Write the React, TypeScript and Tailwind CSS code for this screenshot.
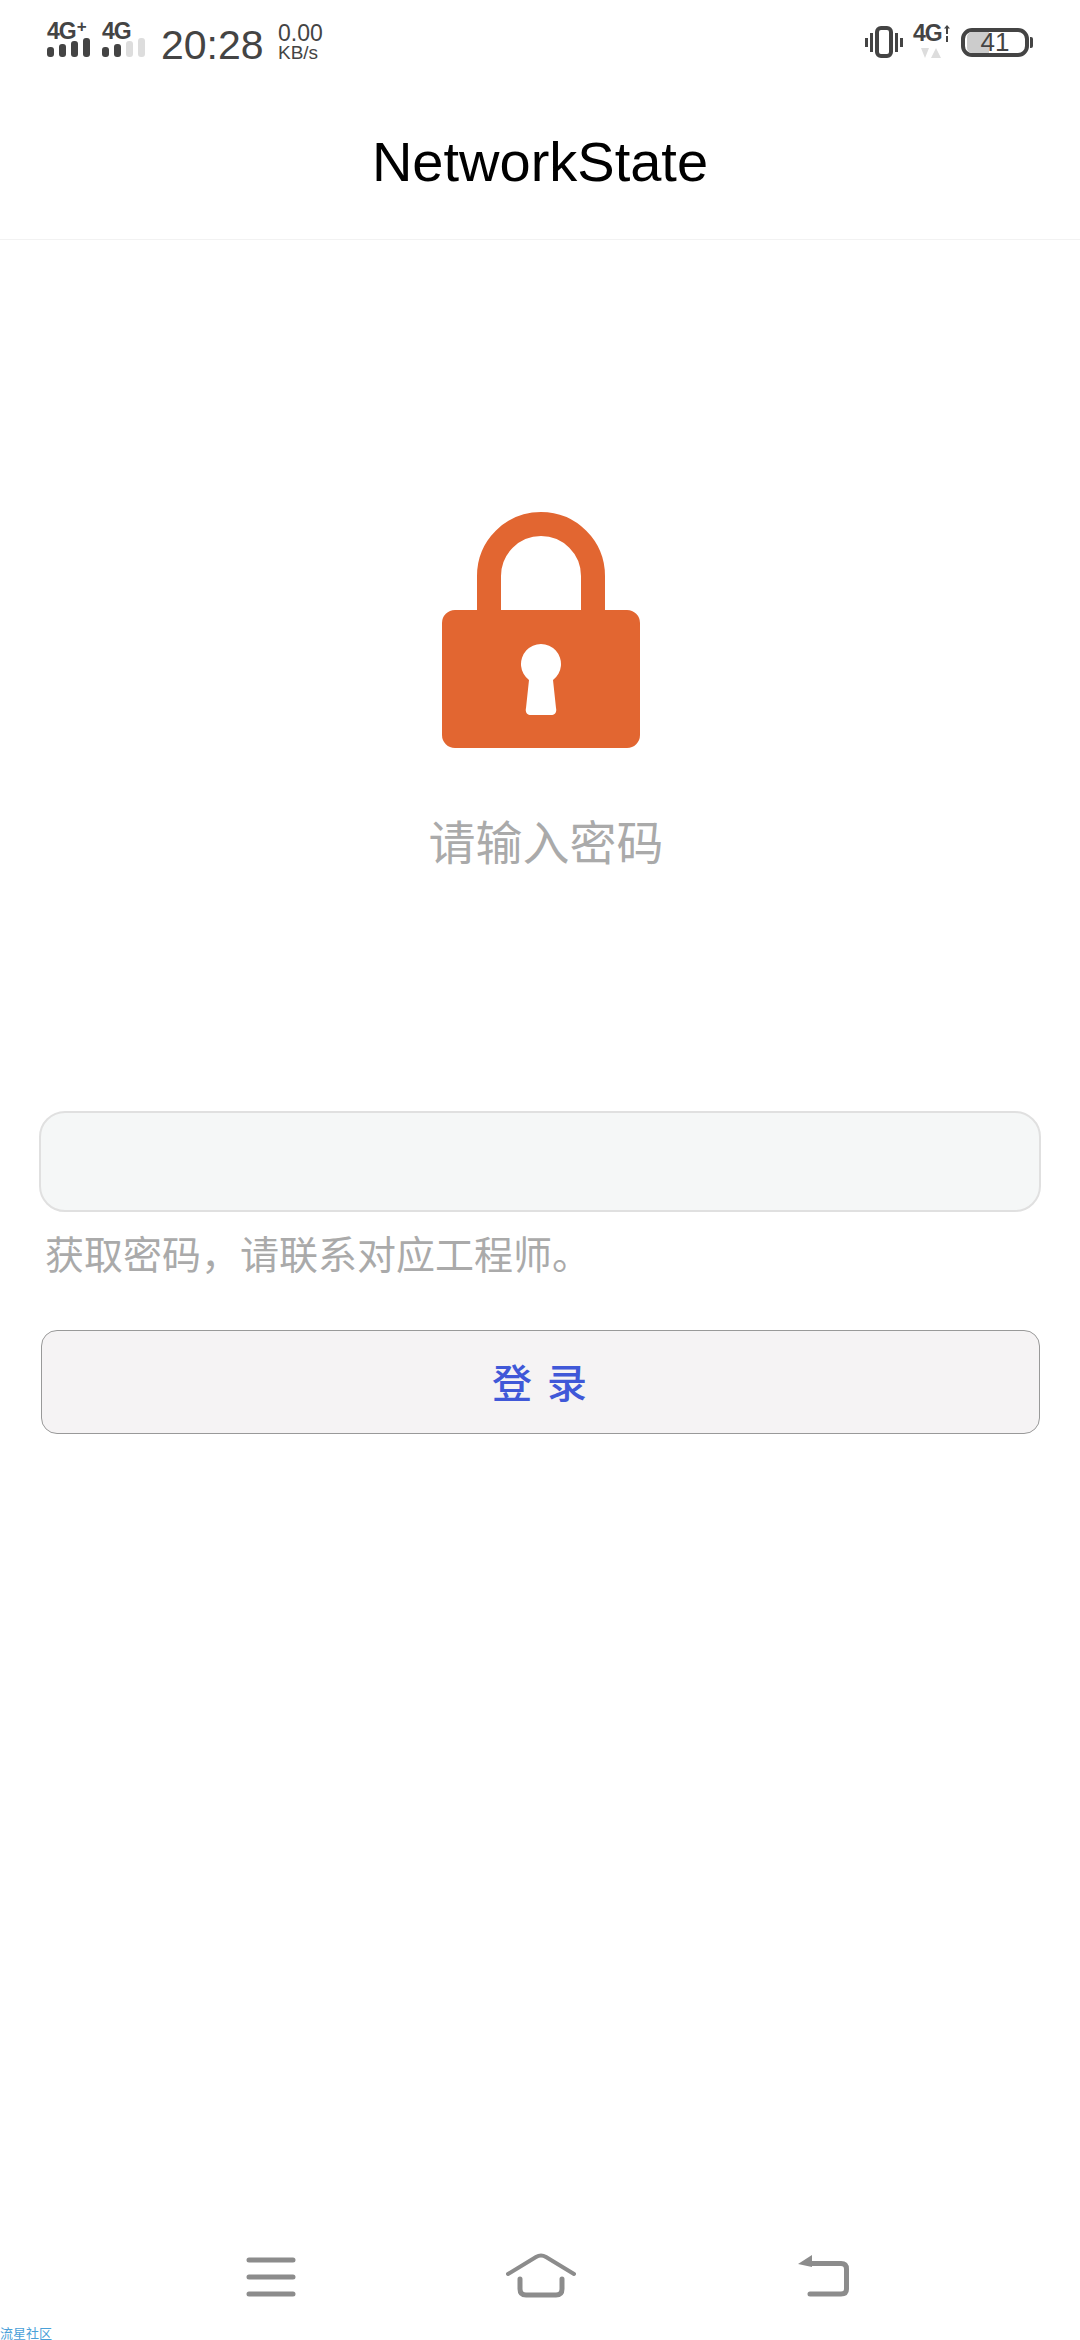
const sans = "font-['Liberation_Sans','Noto_Sans_CJK_SC',sans-serif]";

function Bars({ on }: { on: number }) {
  const heights = ["h-[10px]", "h-[13px]", "h-[16px]", "h-[19px]"];
  return (
    <div className="flex items-end gap-[5px]">
      {heights.map((h, i) => (
        <div key={h} className={`w-[7px] rounded-[3px] ${h} ${i < on ? "bg-[#444444]" : "bg-[#dddddd]"}`} />
      ))}
    </div>
  );
}

function Signal({ plus, on }: { plus?: boolean; on: number }) {
  return (
    <div className="flex flex-col items-start w-[43px] -mt-[10px]">
      <div className="flex items-start h-[20px] text-[#444444] font-bold">
        <span className="text-[23px] leading-[20px] tracking-[-1px]">4G</span>
        {plus && <span className="text-[17px] leading-[11px] ml-[1px]">+</span>}
      </div>
      <div className="-mt-[3px]"><Bars on={on} /></div>
    </div>
  );
}

function Vibrate() {
  return (
    <svg className="-mt-[4px]" width="38" height="32" viewBox="0 0 38 32" fill="none" stroke="#444444">
      <rect x="12" y="2" width="14" height="28" rx="4" strokeWidth="4" />
      <path d="M6.5 7v19M31.5 7v19" strokeWidth="3" />
      <path d="M1.500 12v9M36.500 12v9" strokeWidth="3" />
    </svg>
  );
}

function DataIcon() {
  return (
    <div className="flex flex-col items-start w-[32px] -mt-[7px]">
      <div className="flex items-start h-[20px] text-[#444444] font-bold">
        <span className="text-[23px] leading-[20px] tracking-[-1px]">4G</span>
        <svg className="ml-[2px] mt-[2px]" width="6" height="17" viewBox="0 0 6 17" fill="#444444">
          <path d="M3 0 6 3.500H4V9H2V3.500H0ZM2 11h2v6H2Z" />
        </svg>
      </div>
      <svg className="mt-[5px] ml-[8px]" width="20" height="10" viewBox="0 0 20 10" fill="#dddddd">
        <path d="M0 0h8L4 10ZM15 0l5 10H10Z" />
      </svg>
    </div>
  );
}

function Battery() {
  return (
    <div className="flex items-center -mt-[4px]">
      <div className="relative w-[68px] h-[29px] rounded-[11px] border-[4px] border-[#444444] flex items-center justify-center">
        <div className="absolute left-[2px] top-0 bottom-0 w-[22px] rounded-l-[5px] bg-[#cccccc]" />
        <span className="relative text-[26px] leading-none text-[#444444]">41</span>
      </div>
      <div className="ml-[1px] w-[3px] h-[11px] bg-[#444444] rounded-r-[2px]" />
    </div>
  );
}

function LockIcon() {
  return (
    <svg className="ml-[2px]" width="198" height="238" viewBox="0 0 198 238">
      <path d="M47 105V65a52 52 0 0 1 104 0v40" fill="none" stroke="#e26631" strokeWidth="24" />
      <path
        fillRule="evenodd"
        fill="#e26631"
        d="M13 99H185a13 13 0 0 1 13 13V224a13 13 0 0 1-13 13H13a13 13 0 0 1-13-13V112a13 13 0 0 1 13-13ZM87 169l-3 28c-1 4 1 7 5 7h20c4 0 6-3 5-7l-3-28a20 20 0 1 0-24 0Z"
      />
    </svg>
  );
}

export default function App() {
  return (
    <div className={`w-[1080px] h-[2340px] bg-white flex flex-col relative ${sans}`}>
      <div className="h-[80px] pt-[8px] flex items-center justify-between pl-[47px] pr-[47px]">
        <div className="flex items-center">
          <Signal plus on={4} />
          <div className="w-[12px]" />
          <Signal on={2} />
          <span className="ml-[16px] mt-[2px] text-[41px] leading-none text-[#444444] w-[117px]">20:28</span>
          <div className="flex flex-col text-[#444444] -mt-[2px]">
            <span className="text-[23px] leading-[20px]">0.00</span>
            <span className="text-[19px] leading-[20px]">KB/s</span>
          </div>
        </div>
        <div className="flex items-center">
          <Vibrate />
          <div className="w-[10px]" />
          <DataIcon />
          <div className="w-[16px]" />
          <Battery />
        </div>
      </div>

      <div className="h-[160px] border-b border-[#f2f2f2] flex items-center justify-center">
        <span className="text-[56px] leading-none text-black mt-[4px]">NetworkState</span>
      </div>

      <div className="flex flex-col items-center pt-[271px]">
        <LockIcon />
        <span className="mt-[68px] text-[47px] leading-[54px] text-[#aaaaaa] ml-[12px]">请输入密码</span>
      </div>

      <div className="flex flex-col px-[39px] mt-[240px]">
        <div className="h-[101px] rounded-[26px] border-2 border-[#e0e0e0] bg-[#f5f7f7]" />
        <span className="mt-[21px] ml-[6px] text-[39px] leading-[46px] text-[#aaaaaa]">获取密码，请联系对应工程师。</span>
        <button className="mt-[51px] ml-[2px] mr-[1px] h-[104px] pt-[3px] rounded-[16px] border border-[#999999] bg-[#f5f3f4] text-[40px] font-medium text-[#4058d8] tracking-[2px]">
          登 录
        </button>
      </div>

      <div className="flex-1" />

      <div className="h-[83px] flex items-start pl-[246px]">
        <svg width="50" height="40" viewBox="0 0 50 40" stroke="#8c8c8c" strokeWidth="5" strokeLinecap="round">
          <path d="M3 3h44M3 20h44M3 37h44" />
        </svg>
        <svg className="ml-[210px] -mt-[4px]" width="70" height="46" viewBox="0 0 70 46" fill="none" stroke="#8c8c8c" strokeWidth="4" strokeLinecap="round">
          <path d="M2 21 30 4q5-3 10 0l28 17" />
          <path d="M14 26v10q0 6 6 6h30q6 0 6-6V26" strokeWidth="5" />
        </svg>
        <svg className="ml-[222px] -mt-[2px]" width="52" height="42" viewBox="0 0 52 42" fill="none">
          <path d="M13 8.500H43q5.500 0 5.500 5.500v20q0 5-5.500 5H12" stroke="#8c8c8c" strokeWidth="5" strokeLinecap="round" />
          <path d="M0 9 14 0v12Z" fill="#8c8c8c" />
        </svg>
      </div>
      <span className="absolute left-0 bottom-0 text-[13px] leading-[13px] text-[#4aa0d8]">流星社区</span>
    </div>
  );
}
